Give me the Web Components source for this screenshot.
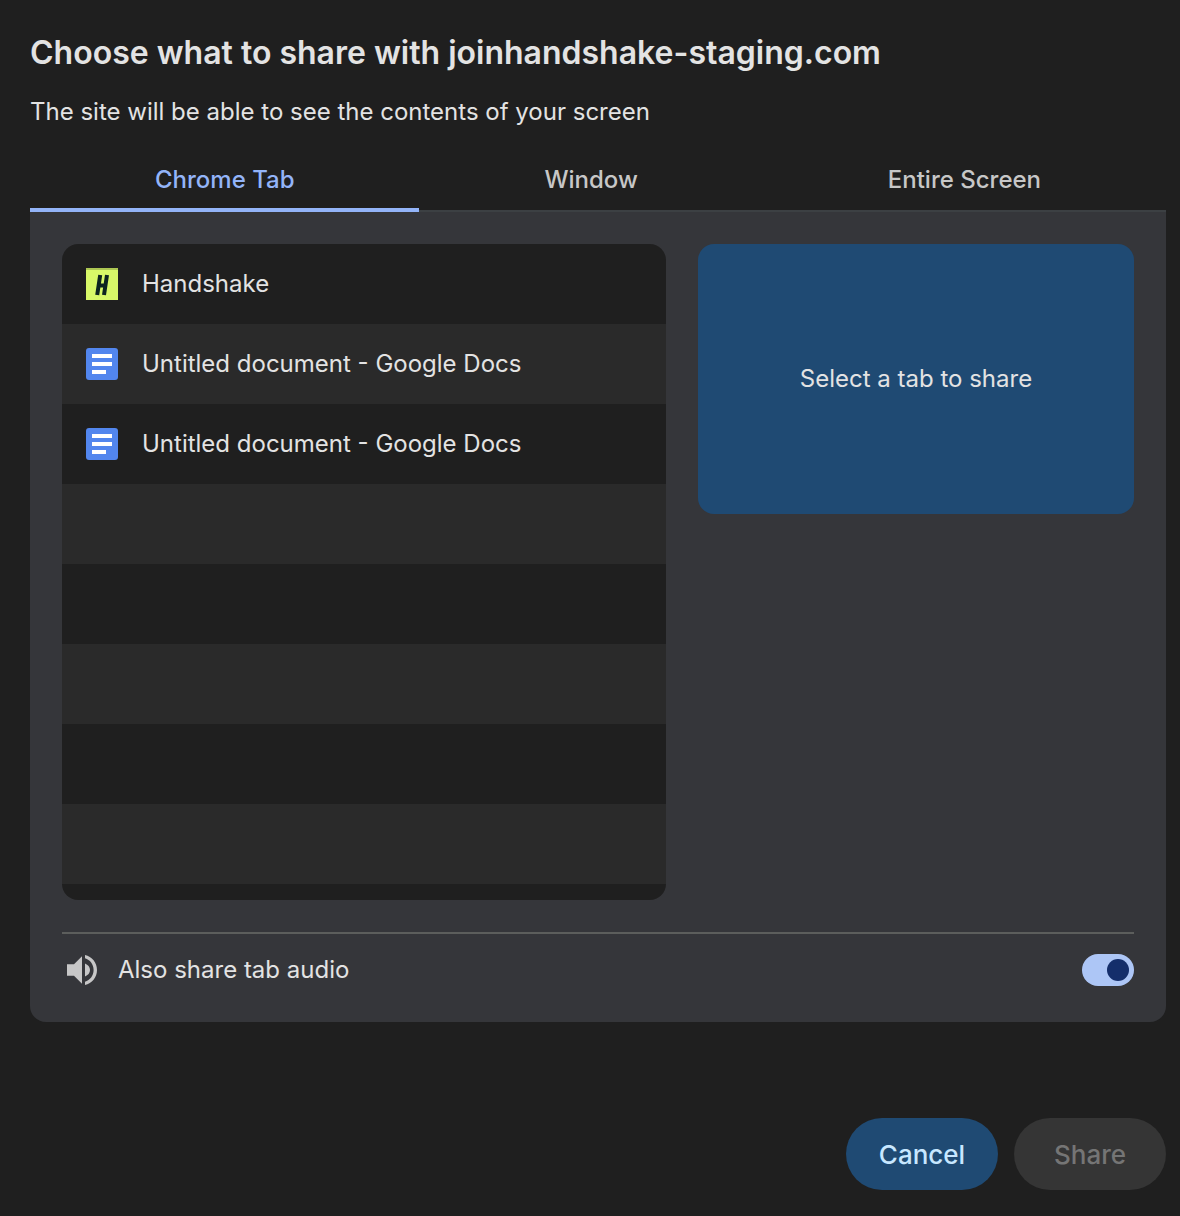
<!DOCTYPE html>
<html lang="en">
<head>
<meta charset="utf-8">
<meta name="viewport" content="width=device-width, initial-scale=1">
<title>Choose what to share</title>
<style>
  html {
    --surface: #1f1f1f;
    --surface-alt: #2a2a2a;
    --panel: #35363a;
    --text: #e3e3e3;
    --muted: #c7c7c7;
    --accent: #93b4f8;
    --tonal: #1f4a73;
    background: var(--surface);
  }

  body {
    margin: 0;
    color: var(--text);
    font: 400 24px/32px Inter, "Liberation Sans", sans-serif;
  }
</style>
</head>
<body>

<share-dialog>
  <span slot="title">Choose what to share with joinhandshake-staging.com</span>
  <span slot="description">The site will be able to see the contents of your screen</span>
  <share-tabs slot="tabs">
    <share-tab selected>Chrome Tab</share-tab>
    <share-tab>Window</share-tab>
    <share-tab>Entire Screen</share-tab>
  </share-tabs>
  <share-panel>
    <source-list slot="sources">
      <source-item icon="handshake">Handshake</source-item>
      <source-item icon="docs">Untitled document - Google Docs</source-item>
      <source-item icon="docs">Untitled document - Google Docs</source-item>
    </source-list>
    <source-preview slot="preview">Select a tab to share</source-preview>
    <audio-toggle slot="audio">Also share tab audio</audio-toggle>
  </share-panel>
  <dialog-button slot="actions" kind="tonal">Cancel</dialog-button>
  <dialog-button slot="actions" disabled>Share</dialog-button>
</share-dialog>

<script>
let icons = {
  handshake: `
    <svg viewBox="0 0 32 32" aria-hidden="true">
      <path fill="#d8f868" d="M0 0h32v32H0z"/>
      <path fill="#adc753" d="M0 0h32v2H0z"/>
      <path class="soft" fill="none" stroke="#0d2420" stroke-width="4" d="M14.2 7 11.200 27M21 7 18 27M13 17.500h7"/>
    </svg>`,
  docs: `
    <svg viewBox="0 0 32 32" aria-hidden="true">
      <rect width="32" height="32" rx="3" fill="#5286ee"/>
      <path class="soft" fill="#fff" d="M6 6h20v4H6zM6 14h20v4H6zM6 22h14v4H6z"/>
    </svg>`
};

function define(tag, content, setup) {
  customElements.define(tag, class extends HTMLElement {
    constructor() {
      super();
      this.attachShadow({ mode : 'open' });
      this.shadowRoot.innerHTML = content;
    }

    connectedCallback() {
      if (setup) setup(this, this.shadowRoot);
    }
  });
}

define('share-dialog', `
  <style>
    :host {
      display: flex;
      flex-direction: column;
      box-sizing: border-box;
      min-height: 100vh;
      padding: 32px 14px 26px 30px;
    }

    h1 {
      margin: 0;
      font-size: 32px;
      font-weight: 600;
      line-height: 42px;
    }

    p {
      margin: 22px 0 20px;
    }

    footer {
      display: flex;
      justify-content: flex-end;
      gap: 16px;
      margin-top: auto;
      padding-top: 32px;
    }
  </style>
  <h1><slot name="title"></slot></h1>
  <p><slot name="description"></slot></p>
  <slot name="tabs"></slot>
  <slot></slot>
  <footer><slot name="actions"></slot></footer>
`);

define('share-tabs', `
  <style>
    :host {
      display: flex;
      background: linear-gradient(#3c4043, #3c4043) bottom / 100% 2px no-repeat;
    }
  </style>
  <slot></slot>
`, function(m) {
  m.setAttribute('role', 'tablist');
  m.addEventListener('click', e => {
    let tab = e.target.closest('share-tab');
    if (!tab) return;
    for (let t of m.children) t.toggleAttribute('selected', t === tab);
  });
});

define('share-tab', `
  <style>
    :host {
      display: block;
      flex: 1 1 auto;
      color: var(--muted);
    }

    :host([selected]) {
      color: var(--accent);
    }

    button {
      width: 100%;
      height: 64px;
      padding: 4px 0 0;
      border: 0;
      border-bottom: 4px solid transparent;
      background: none;
      color: inherit;
      font: inherit;
      font-weight: 500;
      cursor: pointer;
    }

    :host([selected]) button {
      border-color: var(--accent);
    }
  </style>
  <button role="tab"><slot></slot></button>
`);

define('share-panel', `
  <style>
    :host {
      display: block;
      padding: 32px 32px 36px;
      border-radius: 0 0 16px 16px;
      background: var(--panel);
    }

    .columns {
      display: grid;
      grid-template-columns: 604fr 436fr;
      align-items: start;
      gap: 32px;
    }

    hr {
      height: 2px;
      margin: 32px 0 20px;
      border: 0;
      background: #5c5e5c;
    }
  </style>
  <div class="columns">
    <slot name="sources"></slot>
    <slot name="preview"></slot>
  </div>
  <hr>
  <slot name="audio"></slot>
`);

define('source-list', `
  <style>
    :host {
      display: block;
      min-height: 656px;
      overflow: hidden;
      border-radius: 16px;
      background: repeating-linear-gradient(
        var(--surface) 0 80px, var(--surface-alt) 80px 160px);
    }
  </style>
  <slot></slot>
`);

define('source-item', `
  <style>
    :host {
      display: block;
    }

    button {
      display: flex;
      align-items: center;
      gap: 24px;
      width: 100%;
      height: 80px;
      padding: 0 24px;
      border: 0;
      background: none;
      color: inherit;
      font: inherit;
      text-align: left;
      cursor: pointer;
    }

    #icon, svg {
      display: block;
      width: 32px;
      height: 32px;
    }

    .soft {
      filter: blur(0.6px);
    }
  </style>
  <button><span id="icon"></span><slot></slot></button>
`, function(m, s) {
  s.querySelector('#icon').innerHTML = icons[m.getAttribute('icon')];
});

define('source-preview', `
  <style>
    :host {
      display: flex;
      align-items: center;
      justify-content: center;
      aspect-ratio: 436 / 270;
      border-radius: 16px;
      background: var(--tonal);
    }
  </style>
  <slot></slot>
`);

define('audio-toggle', `
  <style>
    :host {
      display: block;
    }

    label {
      display: flex;
      align-items: center;
      gap: 16px;
    }

    svg {
      width: 40px;
      height: 40px;
      margin: -4px 0;
      fill: var(--muted);
    }

    input {
      appearance: none;
      box-sizing: border-box;
      width: 52px;
      height: 32px;
      margin: 0 0 0 auto;
      padding: 5px;
      border-radius: 16px;
      background: #5c5e5c;
    }

    input::before {
      content: '';
      display: block;
      width: 22px;
      height: 22px;
      border-radius: 50%;
      background: #142e6b;
    }

    input:checked {
      background: #adc6f6;
    }

    input:checked::before {
      margin-left: auto;
    }
  </style>
  <label>
    <svg viewBox="0 0 40 40" aria-hidden="true">
      <path d="M5 14.300h7l8-8v27.400l-8-8H5zM23 13.500c3 1.300 5 3.500 5 6.500s-2 5.200-5 6.500zM23 5c7 1.600 12 7.500 12 15s-5 13.400-12 15v-3.300c5-1.500 8.600-6 8.600-11.700S28 9.800 23 8.300z"/>
    </svg>
    <slot></slot>
    <input type="checkbox" role="switch" checked>
  </label>
`);

define('dialog-button', `
  <style>
    :host {
      display: block;
    }

    button {
      min-width: 152px;
      height: 72px;
      padding: 2px 32px 0;
      border: 0;
      border-radius: 36px;
      background: #353535;
      color: #757575;
      font: inherit;
      font-size: 26px;
      font-weight: 500;
    }

    :host([kind=tonal]) button {
      background: var(--tonal);
      color: #c7e7ff;
      cursor: pointer;
    }
  </style>
  <button><slot></slot></button>
`, function(m, s) {
  s.querySelector('button').disabled = m.hasAttribute('disabled');
});
</script>
</body>
</html>
